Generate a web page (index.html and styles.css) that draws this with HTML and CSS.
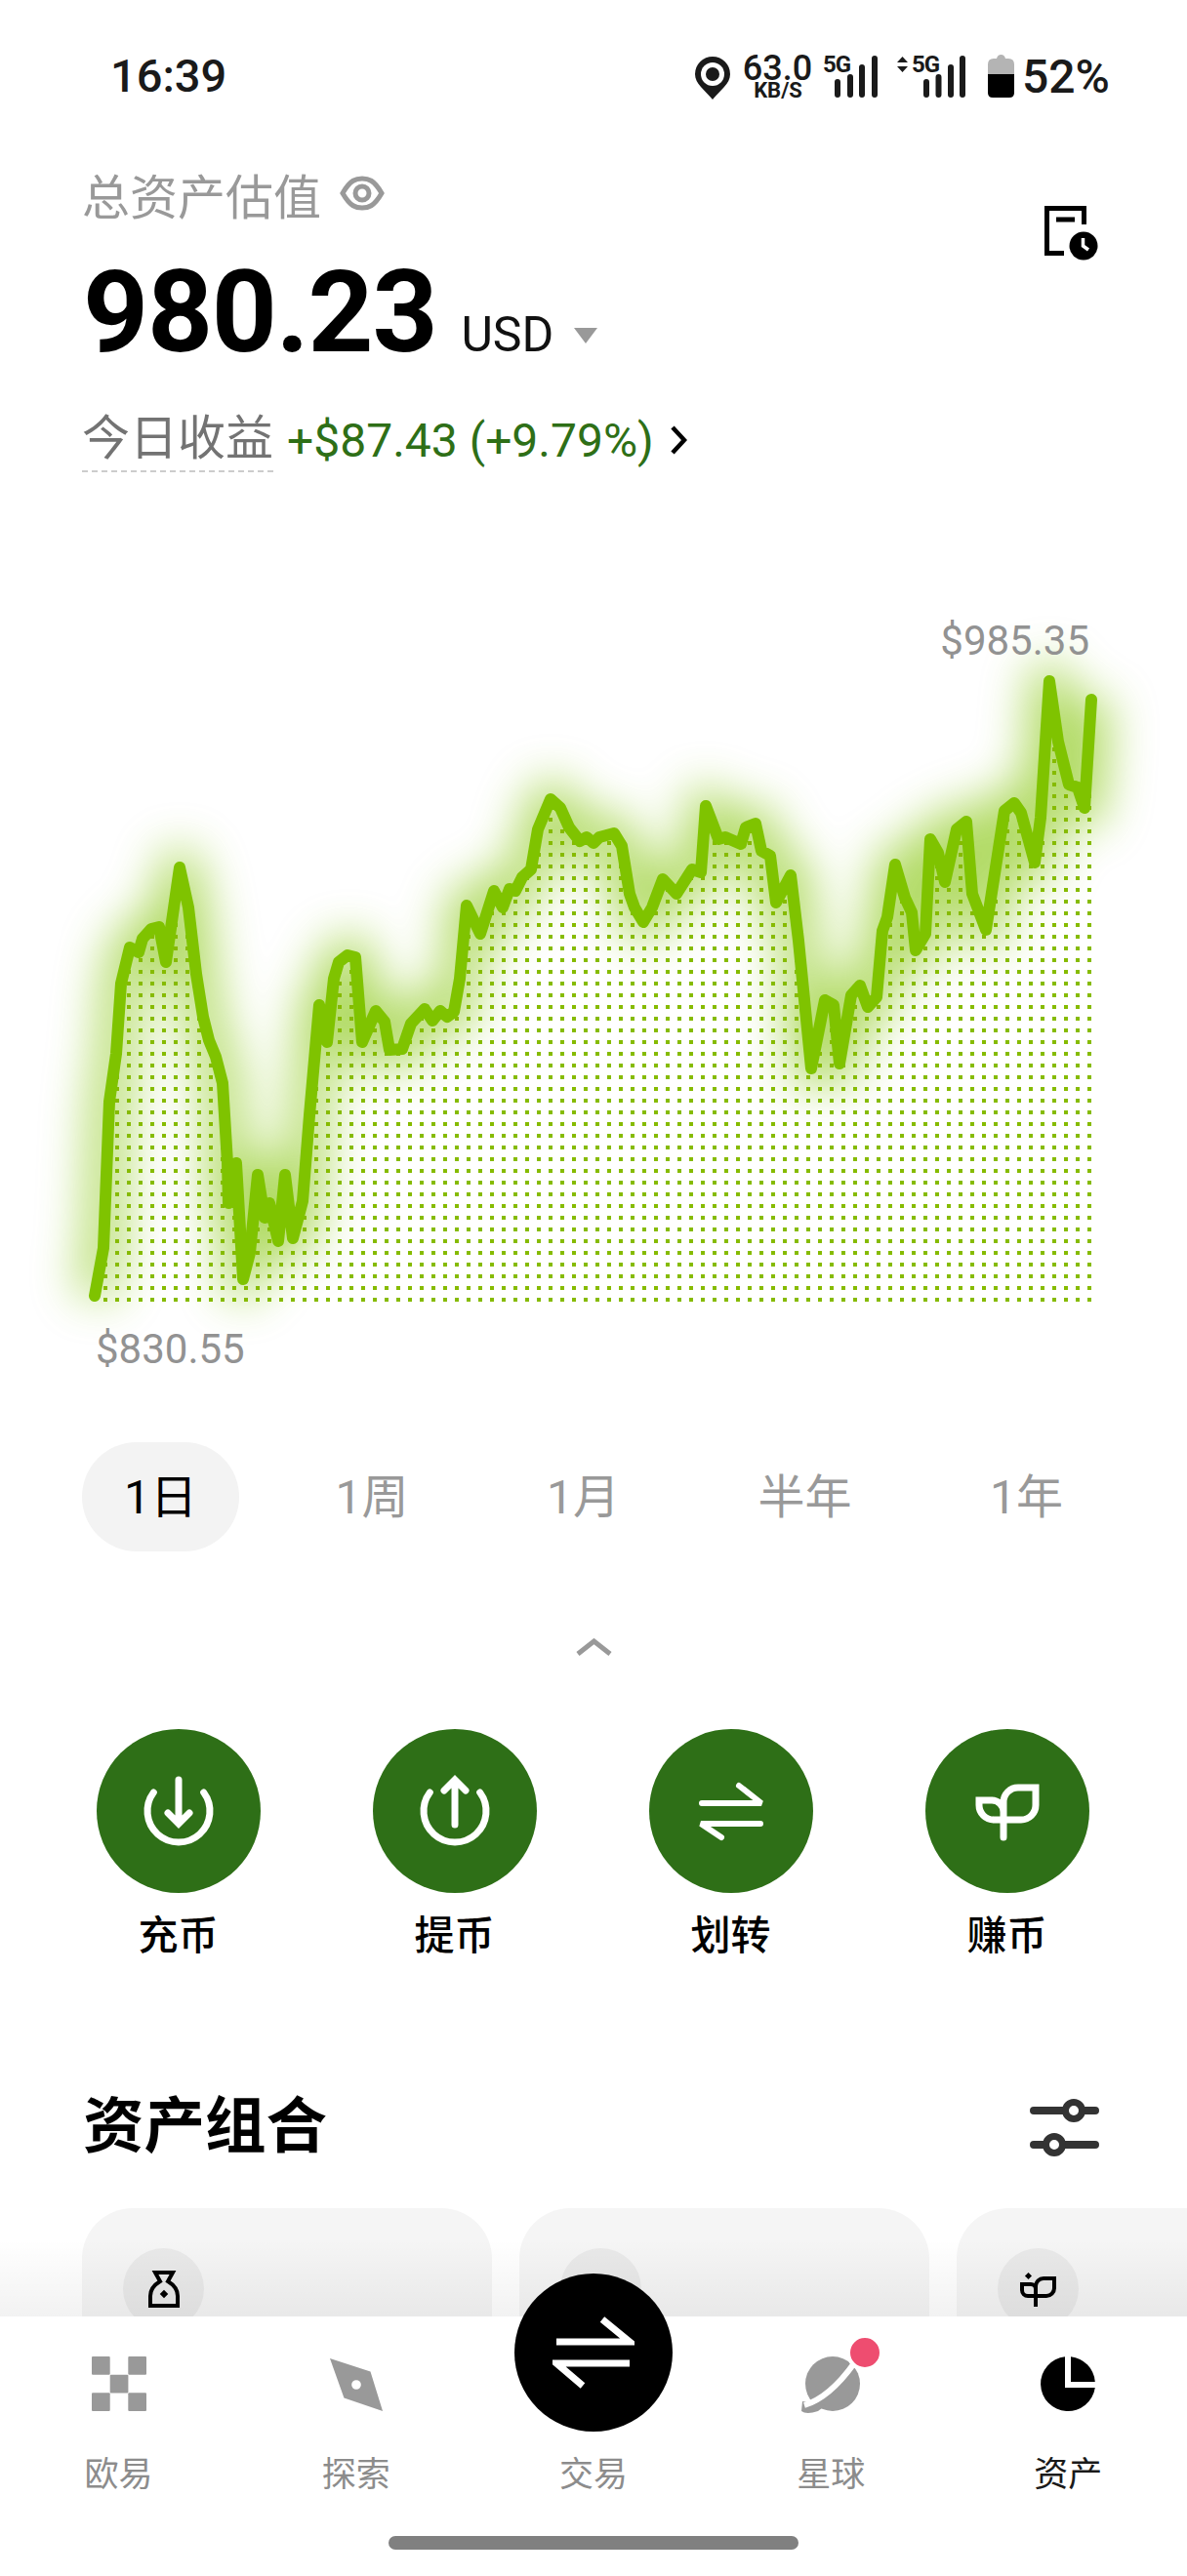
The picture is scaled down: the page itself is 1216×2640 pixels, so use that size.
FILE: index.html
```html
<!DOCTYPE html>
<html lang="zh-CN">
<head>
<meta charset="utf-8">
<title>资产</title>
<link rel="stylesheet" href="styles.css">
</head>
<body>
<div class="page">
  <header class="status">
    <span class="time">16:39</span>
    <svg class="status-icons" viewBox="700 50 440 60" width="440" height="60">
      <path class="ink" d="M730 102 C722 92 712 86 712 76 A18 18 0 0 1 748 76 C748 86 738 92 730 102Z"/>
      <circle cx="730" cy="76" r="12" fill="#fff"/>
      <circle class="ink" cx="730" cy="76" r="7"/>
      <text class="st-speed" x="796.5" y="82" text-anchor="middle">63.0</text>
      <text class="st-unit" x="797" y="100" text-anchor="middle">KB/S</text>
      <text class="st-net" x="843" y="74">5G</text>
      <g class="bars">
        <path d="M858 84V97M871 79V97M883 69V97M896 60V97"/>
      </g>
      <path class="ink" d="M919 64 L924.5 58 L930 64Z M919 68 L930 68 L924.5 74Z"/>
      <text class="st-net" x="934" y="74">5G</text>
      <g class="bars">
        <path d="M949 84V97M961.5 79V97M974 69V97M986 60V97"/>
      </g>
      <path class="bat-top" d="M1012 76V66Q1012 60 1018 60H1021Q1022 56 1025.5 56Q1029 56 1030 60H1033Q1039 60 1039 66V76Z"/>
      <path d="M1012 76H1039V95Q1039 100 1034 100H1017Q1012 100 1012 95Z"/>
      <text class="st-batt" x="1047" y="95">52%</text>
    </svg>
  </header>

  <section class="summary">
    <div class="summary-main">
      <div class="total-label">
        <span>总资产估值</span>
        <svg class="eye" viewBox="-23 -18 46 36" width="46" height="36">
          <path d="M-20 0C-12 -14 -6 -15 0 -15C6 -15 12 -14 20 0C12 14 6 15 0 15C-6 15 -12 14 -20 0Z"/>
          <circle r="7"/>
        </svg>
      </div>
      <div class="total-row">
        <span class="amount">980.23</span>
        <span class="currency">USD</span>
        <span class="caret"></span>
      </div>
      <div class="gain-row">
        <span class="gain-label">今日收益</span>
        <span class="gain-value">+$87.43 (+9.79%)</span>
        <svg class="gain-arrow" viewBox="0 0 18 30" width="18" height="30"><path d="M3 2L15 15L3 28"/></svg>
      </div>
    </div>
    <svg class="history" viewBox="0 0 58 58" width="58" height="58">
      <path class="h-line" d="M41.5 20V3.5H3.5V49.5H21M13 15H32"/>
      <circle cx="41" cy="42" r="14.5"/>
      <path class="h-hand" d="M40.5 34V42L46 46"/>
    </svg>
  </section>

  <section class="chart">
    <svg class="chart-svg" viewBox="0 600 1216 800" width="1216" height="800">
      <defs>
        <polyline id="curve" points="97,1328 106,1279 112,1129 119,1080 124,1008 133,971 142,976 146,962 155,952 163,950 170,986 184,889 193,930 201,998 208,1042 214,1066 221,1083 228,1110 233,1192 234,1233 242,1192 249,1311 256,1284 264,1204 271,1248 276,1233 285,1272 292,1204 300,1269 310,1231 317,1143 327,1030 335,1068 342,1003 347,986 356,979 364,981 371,1068 385,1036 394,1047 399,1076 412,1075 421,1049 435,1034 443,1046 451,1036 458,1042 465,1037 471,1003 478,928 492,957 506,913 515,930 522,911 528,913 535,899 544,891 551,850 564,819 574,828 583,848 594,862 601,858 608,864 614,858 629,854 637,867 645,916 650,930 659,945 668,930 679,901 693,916 709,891 718,894 723,826 736,860 743,858 759,865 764,848 774,844 780,872 789,877 795,925 810,897 818,964 831,1095 845,1025 854,1030 860,1090 872,1020 881,1010 889,1032 898,1022 904,954 909,940 917,886 927,920 934,935 938,974 948,957 953,860 961,874 968,904 980,850 990,842 996,916 1010,953 1029,831 1039,823 1046,833 1060,884 1066,838 1075,698 1084,760 1095,804 1104,807 1111,828 1118,717"/>
        <pattern id="dots" patternUnits="userSpaceOnUse" x="-6" y="-6" width="12" height="12">
          <rect x="4" y="4" width="4" height="4" fill="#86bb00"/>
        </pattern>
        <clipPath id="under">
          <polygon points="97,1336 97,1328 106,1279 112,1129 119,1080 124,1008 133,971 142,976 146,962 155,952 163,950 170,986 184,889 193,930 201,998 208,1042 214,1066 221,1083 228,1110 233,1192 234,1233 242,1192 249,1311 256,1284 264,1204 271,1248 276,1233 285,1272 292,1204 300,1269 310,1231 317,1143 327,1030 335,1068 342,1003 347,986 356,979 364,981 371,1068 385,1036 394,1047 399,1076 412,1075 421,1049 435,1034 443,1046 451,1036 458,1042 465,1037 471,1003 478,928 492,957 506,913 515,930 522,911 528,913 535,899 544,891 551,850 564,819 574,828 583,848 594,862 601,858 608,864 614,858 629,854 637,867 645,916 650,930 659,945 668,930 679,901 693,916 709,891 718,894 723,826 736,860 743,858 759,865 764,848 774,844 780,872 789,877 795,925 810,897 818,964 831,1095 845,1025 854,1030 860,1090 872,1020 881,1010 889,1032 898,1022 904,954 909,940 917,886 927,920 934,935 938,974 948,957 953,860 961,874 968,904 980,850 990,842 996,916 1010,953 1029,831 1039,823 1046,833 1060,884 1066,838 1075,698 1084,760 1095,804 1104,807 1111,828 1118,717 1120,1336"/>
        </clipPath>
        <filter id="blur" x="-10%" y="-20%" width="120%" height="140%">
          <feGaussianBlur stdDeviation="24"/>
        </filter>
      </defs>
      <use href="#curve" class="glow"/>
      <rect x="90" y="650" width="1040" height="690" fill="url(#dots)" clip-path="url(#under)"/>
      <use href="#curve" class="line"/>
    </svg>
    <span class="chart-label chart-high">$985.35</span>
    <span class="chart-label chart-low">$830.55</span>
  </section>

  <nav class="tabs">
    <span class="tab active">1日</span>
    <span class="tab">1周</span>
    <span class="tab">1月</span>
    <span class="tab">半年</span>
    <span class="tab">1年</span>
  </nav>

  <div class="collapse">
    <svg viewBox="0 0 37 18" width="37" height="18"><path d="M2 16L18.5 3L35 16"/></svg>
  </div>

  <section class="actions">
    <div class="action">
      <span class="action-circle">
        <svg viewBox="-42 -42 84 84" width="84" height="84"><path d="M-25.7 -19A32 32 0 1 0 25.7 -19"/><path d="M0 -32V12M-11 2L0 13L11 2"/></svg>
      </span>
      <span class="action-label">充币</span>
    </div>
    <div class="action">
      <span class="action-circle">
        <svg viewBox="-42 -42 84 84" width="84" height="84"><path d="M-25.7 -19A32 32 0 1 0 25.7 -19"/><path d="M0 14V-30M-11 -21L0 -32L11 -21"/></svg>
      </span>
      <span class="action-label">提币</span>
    </div>
    <div class="action">
      <span class="action-circle">
        <svg class="swap" viewBox="-42 -42 84 84" width="84" height="84"><path d="M-30 -8H31L8 -26"/><path d="M30 13H-31L-10 27"/></svg>
      </span>
      <span class="action-label">划转</span>
    </div>
    <div class="action">
      <span class="action-circle">
        <svg viewBox="-42 -42 84 84" width="84" height="84"><path d="M-4 27V-9A15 15 0 0 1 11 -24H29V-6A15 15 0 0 1 14 9H-14A15 15 0 0 1 -29 -6V-11H-16A12 12 0 0 1 -4 1"/></svg>
      </span>
      <span class="action-label">赚币</span>
    </div>
  </section>

  <section class="portfolio-head">
    <h2>资产组合</h2>
    <svg class="sliders" viewBox="0 0 71 59" width="71" height="59">
      <path d="M4 12H67M4 47H67"/>
      <circle cx="45" cy="12" r="8.5"/>
      <circle cx="25" cy="47" r="8.5"/>
    </svg>
  </section>

  <section class="cards">
    <div class="card">
      <span class="card-icon">
        <svg viewBox="0 0 32 38" width="32" height="38"><path d="M7 2H25L20 11C25 14 30 19 30 26V36H2V26C2 19 7 14 12 11Z"/><rect class="gem" x="13" y="21" width="6" height="6" transform="rotate(45 16 24)"/></svg>
      </span>
    </div>
    <div class="card"><span class="card-icon"></span></div>
    <div class="card">
      <span class="card-icon">
        <svg viewBox="0 0 40 38" width="40" height="38"><path d="M17 37V16A8 8 0 0 1 25 8H36V18A8 8 0 0 1 28 26H9A6 6 0 0 1 3 20V14H12A5 5 0 0 1 17 19"/><rect class="gem" x="7" y="3" width="5" height="5" transform="rotate(45 9.5 5.5)"/></svg>
      </span>
    </div>
  </section>

  <div class="nav-shade"></div>
  <footer class="nav">
    <button class="trade-btn" type="button" aria-label="交易">
      <svg viewBox="-42 -42 84 84" width="84" height="84"><path d="M-38 -11H37L9 -34"/><path d="M37 11H-38L-11 34"/></svg>
    </button>
    <div class="nav-row">
      <div class="nav-item">
        <svg class="nav-icon" viewBox="0 0 56 56" width="56" height="56"><rect width="18.7" height="18.7" rx="1"/><rect x="37.3" width="18.7" height="18.7" rx="1"/><rect x="18.7" y="18.7" width="18.7" height="18.7" rx="1"/><rect y="37.3" width="18.7" height="18.7" rx="1"/><rect x="37.3" y="37.3" width="18.7" height="18.7" rx="1"/></svg>
        <span>欧易</span>
      </div>
      <div class="nav-item">
        <svg class="nav-icon" viewBox="0 0 58 58" width="58" height="56"><path fill-rule="evenodd" d="M1 2L44 16L57 58L16 44ZM29 25A5 5 0 1 0 29 35A5 5 0 1 0 29 25Z"/></svg>
        <span>探索</span>
      </div>
      <div class="nav-item">
        <span class="nav-icon-space"></span>
        <span>交易</span>
      </div>
      <div class="nav-item">
        <span class="planet-wrap">
          <svg class="nav-icon" viewBox="0 0 58 56" width="58" height="56">
            <circle cx="31" cy="28" r="28"/>
            <path d="M0 46L-1 56Q4 60 16 56L24 50Z"/>
            <path class="planet-gap" d="M2 50Q28 42 53 7"/>
          </svg>
          <span class="badge"></span>
        </span>
        <span>星球</span>
      </div>
      <div class="nav-item current">
        <svg class="nav-icon" viewBox="0 0 56 56" width="56" height="56"><path d="M31 .2A28 28 0 0 1 55.8 26H31Z"/><path d="M25 .2A28 28 0 1 0 55.8 32H25Z"/></svg>
        <span>资产</span>
      </div>
    </div>
    <div class="home-bar"></div>
  </footer>
</div>
</body>
</html>
```

FILE: styles.css
```css
* { box-sizing: border-box; }
html, body { margin: 0; padding: 0; background: #fff; }
body { font-family: Roboto, "Noto Sans CJK SC", sans-serif; color: #000; }
.page { position: relative; width: 1216px; height: 2640px; overflow: hidden; background: #fff; }

/* status bar */
.status { display: flex; justify-content: space-between; height: 168px; padding: 50px 76px 0 113px; }
.time { font-size: 47px; font-weight: 500; line-height: 56px; color: #1a1a1a; }
.status-icons { display: block; }
.status-icons .ink { fill: #1a1a1a; }
.status-icons text { fill: #1a1a1a; font-family: Roboto, sans-serif; }
.st-speed { font-size: 36px; font-weight: 500; }
.st-unit { font-size: 22px; font-weight: 700; }
.st-net { font-size: 24px; font-weight: 700; letter-spacing: -1px; }
.st-batt { font-size: 48px; font-weight: 500; }
.bars path { fill: none; stroke: #1a1a1a; stroke-width: 6; stroke-linecap: round; }
.bat-top { fill: #b4b4b4; }

/* summary */
.summary { display: flex; justify-content: space-between; padding: 0 89px 0 84px; height: 317px; }
.total-label { display: flex; align-items: center; gap: 19px; height: 60px; font-size: 49px; color: #999; }
.eye { fill: none; stroke: #999; stroke-width: 5; }
.total-row { display: flex; align-items: baseline; height: 116px; margin-top: 34px; }
.amount { font-size: 117px; font-weight: 700; line-height: 116px; letter-spacing: -1.2px; margin-left: 1px; }
.currency { font-size: 50px; line-height: 48px; margin-left: 25px; color: #111; }
.caret { width: 0; height: 0; margin-left: 21px; border-left: 12px solid transparent; border-right: 12px solid transparent; border-top: 16px solid #999; position: relative; top: -8px; }
.gain-row { display: flex; align-items: center; height: 64px; margin-top: 41px; font-size: 48px; }
.gain-label { font-size: 49px; color: #737373; line-height: 64px; border-bottom: 2px dashed #ccc; }
.gain-value { color: #2e6f17; margin-left: 14px; }
.gain-arrow { margin-left: 16px; fill: none; stroke: #000; stroke-width: 4.5; }
.history { margin-top: 42px; overflow: visible; }
.h-line { fill: none; stroke: #000; stroke-width: 5; }
.h-hand { fill: none; stroke: #fff; stroke-width: 3.5; }

/* chart */
.chart { position: relative; height: 800px; margin-top: 115px; }
.chart-svg { display: block; overflow: visible; }
.glow { fill: none; stroke: #7fc300; stroke-width: 40; stroke-linejoin: round; opacity: .6; filter: url(#blur); }
.line { fill: none; stroke: #7fc300; stroke-width: 12; stroke-linejoin: round; stroke-linecap: round; }
.chart-label { position: absolute; font-size: 42px; line-height: 50px; color: #929292; }
.chart-high { right: 100px; top: 32px; }
.chart-low { left: 98px; top: 758px; }

/* ranges */
.tabs { display: flex; justify-content: space-between; margin: 78px 84px 0; }
.tab { display: block; padding: 0 43px; height: 112px; line-height: 114px; border-radius: 56px; font-size: 48px; color: #999; }
.tab.active { background: #f3f3f3; color: #000; }

.collapse { display: flex; justify-content: center; margin-top: 89px; height: 18px; }
.collapse svg { fill: none; stroke: #999; stroke-width: 5; }

/* actions */
.actions { display: grid; grid-template-columns: repeat(4, 283px); margin: 75px 0 0 41px; }
.action { display: flex; flex-direction: column; align-items: center; }
.action-circle { display: flex; align-items: center; justify-content: center; width: 168px; height: 168px; border-radius: 50%; background: #2e6f17; }
.action-circle svg { fill: none; stroke: #fff; stroke-width: 7; stroke-linecap: round; stroke-linejoin: miter; }
.action-circle .swap { stroke-width: 6; stroke-linejoin: bevel; }
.action-label { margin-top: 19px; font-size: 41px; line-height: 50px; font-weight: 500; color: #000; }

/* portfolio */
.portfolio-head { display: flex; align-items: center; justify-content: space-between; height: 90px; margin-top: 126px; padding: 0 90px 0 85px; }
.portfolio-head h2 { margin: 0; font-size: 62.5px; line-height: 90px; font-weight: 700; }
.sliders { fill: #fff; stroke: #333; stroke-width: 7; }
.sliders path { stroke-width: 8; stroke-linecap: round; }
.cards { display: flex; gap: 28px; margin: 38px 0 0 84px; }
.card { flex: 0 0 420px; height: 300px; padding: 41px 0 0 42px; border-radius: 52px; background: #f5f5f5; }
.card-icon { display: flex; align-items: center; justify-content: center; width: 83px; height: 83px; border-radius: 50%; background: #e9e9e9; }
.card-icon svg { fill: none; stroke: #000; stroke-width: 4; }
.gem { fill: #000; stroke: none; }

/* bottom nav */
.nav-shade { position: absolute; left: 0; right: 0; top: 2295px; height: 79px; background: linear-gradient(to bottom, rgba(0,0,0,0), rgba(0,0,0,.05)); }
.nav { position: absolute; left: 0; right: 0; top: 2374px; bottom: 0; background: #fff; }
.nav-row { display: grid; grid-template-columns: repeat(5, 243.2px); padding-top: 41px; }
.nav-item { display: flex; flex-direction: column; align-items: center; font-size: 35px; color: #8c8c8c; }
.nav-item > span:last-child { margin-top: 44px; line-height: 44px; }
.nav-icon { display: block; fill: #999; overflow: visible; }
.nav-icon-space { display: block; height: 56px; }
.planet-wrap { position: relative; display: block; height: 56px; }
.planet-gap { fill: none; stroke: #fff; stroke-width: 6; }
.badge { position: absolute; left: 45px; top: -23px; width: 38px; height: 38px; border-radius: 50%; background: #ee4d70; border: 4px solid #fff; }
.current { color: #1a1a1a; }
.current .nav-icon { fill: #000; }
.trade-btn { position: absolute; left: 527px; top: -44px; display: flex; align-items: center; justify-content: center; width: 162px; height: 162px; padding: 0; border: 0; border-radius: 50%; background: #000; }
.trade-btn svg { fill: none; stroke: #fff; stroke-width: 7; }
.home-bar { width: 420px; height: 14px; margin: 40px auto 0; border-radius: 7px; background: #808080; }
```
